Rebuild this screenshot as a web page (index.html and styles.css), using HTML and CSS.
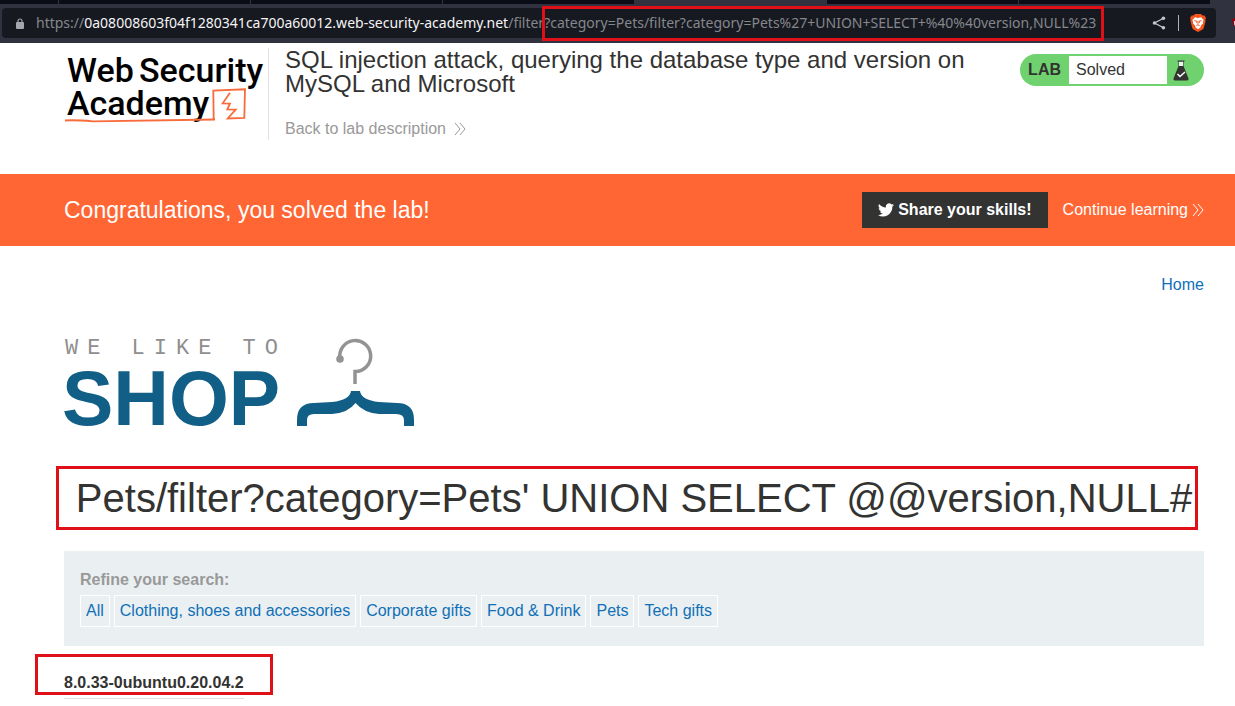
FILE: index.html
```html
<!DOCTYPE html>
<html lang="en">
<head>
<meta charset="utf-8">
<title>SQL injection attack, querying the database type and version on MySQL and Microsoft</title>
<link rel="stylesheet" href="styles.css">
</head>
<body>
<div class="browser">
  <div class="tabs"><span class="tab tab-first"></span><span class="tab"></span><span class="tab"></span><span class="tab"></span><span class="tab tab-active"></span><span class="tab"></span><span class="tab"></span></div>
  <div class="toolbar">
    <div class="address">
      <svg class="lock" viewBox="0 0 8 11" aria-hidden="true"><path d="M2 5V3a2 2 0 0 1 4 0v2" fill="none" stroke="#a5a7ad" stroke-width="1.2"/><rect y="4" width="8" height="7" rx="1" fill="#a5a7ad"/></svg>
      <span class="url">https://<span class="host">0a08008603f04f1280341ca700a60012.web-security-academy.net</span>/filter?category=Pets/filter?category=Pets%27+UNION+SELECT+%40%40version,NULL%23</span>
      <button class="icon-button share" aria-label="Share"><svg width="14" height="14" viewBox="0 0 14 14"><path d="M11.5 2.2 2.5 7l9 4.8" fill="none" stroke="#c6c7cc" stroke-width="1.3"/><g fill="#c6c7cc"><circle cx="11.4" cy="2.3" r="1.8"/><circle cx="2.5" cy="7" r="1.8"/><circle cx="11.4" cy="11.7" r="1.8"/></g></svg></button>
      <button class="icon-button shield" aria-label="Shields"><svg width="16" height="18" viewBox="0 0 16 18"><path d="M5 0h6l1.5 1.6 1.9-.2L16 4l-.7 1.8.3 1.2-2 7.4-1.4 1.4L8 18l-4.2-2.2-1.4-1.4L.4 7l.3-1.2L0 4l1.6-2.6 1.9.2z" fill="#f1541c"/><path d="M5 3.2 8 4l3-.8 2.6 2.7-.7 2.1.2 1.2-2.5 2.8.3 1L8 15.2 5.100 13l.3-1-2.5-2.800.2-1.200-.7-2.100z" fill="#fff"/><path d="m4.300 6.600 2.500.5-.4 1.800M11.700 6.600l-2.500.5.4 1.800M8 7v3.500M6.300 11.700 8 10.700l1.700 1" fill="none" stroke="#f1541c" stroke-width=".9"/></svg></button>
    </div>
    <svg class="extension" width="8" height="12" viewBox="0 0 8 12" aria-hidden="true"><path d="M0 1.500Q4 1.500 8 0v12Q0 10 0 1.500z" fill="#8c0714"/><path d="M3 4v3q0 1.500 2 1.500h3" fill="none" stroke="#fff" stroke-width="1.500"/></svg>
  </div>
  <div class="mark mark-url"></div>
</div>

<header class="lab-header">
  <a class="academy" href="#" aria-label="Web Security Academy">
    <svg width="204" height="76" viewBox="0 0 204 76">
      <g class="academy-text"><text x="3" y="28">Web</text><text x="75" y="28">Security</text><text x="3" y="61">Academy</text></g>
      <path d="M1 66.500Q10 65.700 29 67.300L151 65.500M149.700 66 149.300 36.500 181 35.300 180.300 64 163.700 64.500 171.700 55.500 163.300 55.300 166 49.500 158.700 49.300 166 38.700" fill="none" stroke="#f76b3d" stroke-width="1.800"/>
    </svg>
  </a>
  <div class="lab-title">
    <h2>SQL injection attack, querying the database type and version on MySQL and Microsoft</h2>
    <a class="back" href="#">Back to lab description <svg class="chevrons" viewBox="0 0 12 12" aria-hidden="true"><path d="m1 0 5 6-5 6M6 0l5 6-5 6"/></svg></a>
  </div>
  <div class="lab-status">
    <span class="lab-label">LAB</span>
    <p>Solved</p>
    <svg width="37" height="28" viewBox="0 0 37 28" aria-hidden="true"><path d="M11.500 5h5v5l5 12.500q.5 2-1.500 2H8q-2 0-1.500-2l5-12.500z" fill="#333332"/><path d="M12 5.500h4v4.500h-4z" fill="#eef5ed"/><path d="M10.500 5h7" stroke="#333332"/><path d="m10.500 18 2.500 2.500 5-4.500" fill="none" stroke="#fff" stroke-width="1.500"/></svg>
  </div>
</header>

<section class="banner">
  <p>Congratulations, you solved the lab!</p>
  <button class="share-skills"><svg width="16" height="14" viewBox="0 0 24 20" aria-hidden="true"><path d="M24 2.400a10 10 0 0 1-2.800.8A5 5 0 0 0 23.300.5a10 10 0 0 1-3.100 1.200 4.900 4.900 0 0 0-8.400 4.500A14 14 0 0 1 1.700 1a4.900 4.900 0 0 0 1.500 6.600A5 5 0 0 1 1 7v.1a4.900 4.900 0 0 0 3.900 4.800 5 5 0 0 1-2.200.1 4.900 4.900 0 0 0 4.600 3.400A10 10 0 0 1 0 17.500a14 14 0 0 0 21.500-12.600A10 10 0 0 0 24 2.400z" fill="#fff"/></svg>Share your skills!</button>
  <a class="continue" href="#">Continue learning <svg class="chevrons" viewBox="0 0 12 12" aria-hidden="true"><path d="m1 0 5 6-5 6M6 0l5 6-5 6"/></svg></a>
</section>

<main class="shop">
  <nav><a href="#">Home</a></nav>
  <div class="shop-logo">
    <svg width="352" height="92" viewBox="0 0 352 92" role="img" aria-label="We like to shop">
      <text class="slogan" x="1" y="15">WE LIKE TO</text>
      <text class="shop-word" x="-2" y="86">SHOP</text>
      <path d="M276 20A15.500 15.500 0 1 1 291 32.500V45" fill="none" stroke="#939393" stroke-width="3.500"/><circle cx="276" cy="20" r="3.800" fill="#939393"/>
      <path d="M233 87V81Q233 64 250 64L268 63Q286 61 287 52H296Q297 61 315 63L333 64Q350 64 350 81V87H340V81Q340 75 332 75L315 75Q300 74 291.500 64Q284 74 268 75L250 75Q243 75 243 81V87Z" fill="#115f86"/>
    </svg>
  </div>
  <h1>Pets/filter?category=Pets' UNION SELECT @@version,NULL#</h1>
  <section class="filters">
    <h3>Refine your search:</h3>
    <div class="filter-list"><a href="#">All</a><a href="#">Clothing, shoes and accessories</a><a href="#">Corporate gifts</a><a href="#">Food &amp; Drink</a><a href="#">Pets</a><a href="#">Tech gifts</a></div>
  </section>
  <table class="results"><tbody><tr><th scope="row">8.0.33-0ubuntu0.20.04.2</th></tr></tbody></table>
  <div class="mark mark-title"></div>
  <div class="mark mark-result"></div>
</main>
</body>
</html>
```

FILE: styles.css
```css
* { box-sizing: border-box; }
body { margin: 0; background: #fff; color: #333332; font: 16px/20px "Liberation Sans", Arial, sans-serif; overflow-x: hidden; }
h1, h2, h3, p { margin: 0; font-weight: 400; }
a { color: #0f70b7; text-decoration: none; }
button { border: 0; padding: 0; font: inherit; cursor: pointer; }
svg { display: block; flex: none; overflow: visible; }

.browser { position: relative; overflow: hidden; background: #30323f; }
.tabs { display: flex; height: 4px; overflow: hidden; }
.tab { flex: none; width: 192px; background: #0b0d16; border-right: 1px solid #30323f; }
.tab-first { width: 59px; }
.tab-active { background: #30323f; }
.toolbar { display: flex; align-items: center; gap: 16px; height: 39px; padding: 0 0 1px 2px; }
.address { flex: 1; min-width: 0; display: flex; align-items: center; height: 30px; padding: 0 10px 0 14px; background: #171920; border-radius: 4px; }
.lock { width: 8px; height: 11px; margin-right: 12px; }
.url { flex: 1; min-width: 0; overflow: hidden; white-space: nowrap; color: #85878d; font: 14px/20px "Noto Sans", sans-serif; }
.host { color: #f4f4f5; }
.icon-button { display: flex; align-items: center; background: transparent; }
.share { height: 16px; padding-right: 12px; border-right: 1px solid #b0b1b6; }
.shield { margin-left: 11px; }
.extension { margin-right: -5px; }

.mark { position: absolute; border: 3px solid #e01019; pointer-events: none; }
.mark-url { left: 542px; top: 6px; width: 562px; height: 35px; }
.mark-title { left: 56px; top: 220px; width: 1142px; height: 64px; }
.mark-result { left: 35px; top: 408px; width: 238px; height: 41px; }

.lab-header { display: flex; align-items: flex-start; height: 131px; padding: 5px 31px 0 64px; }
.academy { padding: 6px 0 4px; border-right: 1px solid #e3e3e3; height: 92px; width: 205px; }
.academy-text { font: 500 34px Roboto, sans-serif; fill: #000; }
.lab-title { flex: 1; padding: 0 40px 0 16px; }
.lab-title h2 { max-width: 690px; font-size: 24px; line-height: 24px; }
.back { display: inline-flex; align-items: center; gap: 8px; margin-top: 23px; color: #999; }
.chevrons { width: 12px; height: 12px; fill: none; stroke: currentColor; stroke-width: 1; }
.lab-status { display: flex; align-items: center; margin-top: 6px; height: 32px; padding: 2px 0; border-radius: 16px; background: #6fd26e; }
.lab-label { padding: 0 8px; font-weight: 700; }
.lab-status p { width: 98px; height: 28px; padding: 4px 7px; background: #fff; }

.banner { display: flex; align-items: center; min-height: 72px; padding: 0 31px 0 64px; background: #f63; color: #fff; }
.banner p { flex: 1; font-size: 23px; line-height: 28px; }
.share-skills { display: flex; align-items: center; gap: 4px; height: 36px; padding: 0 16px; background: #333332; color: #fff; font-weight: 700; }
.continue { display: flex; align-items: center; gap: 4px; margin-left: 15px; color: #fff; }

.shop { position: relative; padding: 29px 31px 0 64px; }
.shop nav { text-align: right; }
.shop-logo { margin-top: 44px; }
.slogan { font: 22px "Liberation Mono", monospace; letter-spacing: 9px; fill: #8f8f8f; }
.shop-word { font: 700 77px "Liberation Sans", Arial, sans-serif; fill: #115f86; }
.shop h1 { margin-top: 43px; font-size: 40px; line-height: 48px; text-align: center; white-space: nowrap; }
.filters { margin-top: 29px; padding: 19px 16px; background: #eaeff1; }
.filters h3 { color: #999; font-size: 16px; font-weight: 700; }
.filter-list { display: flex; flex-wrap: wrap; gap: 4px; margin-top: 5px; }
.filter-list a { padding: 5px; border: 1px solid #fff; }
.results { margin-top: 20px; border-collapse: collapse; }
.results th { padding: 7px 0 5px; border-bottom: 1px solid #ddd; }
```
